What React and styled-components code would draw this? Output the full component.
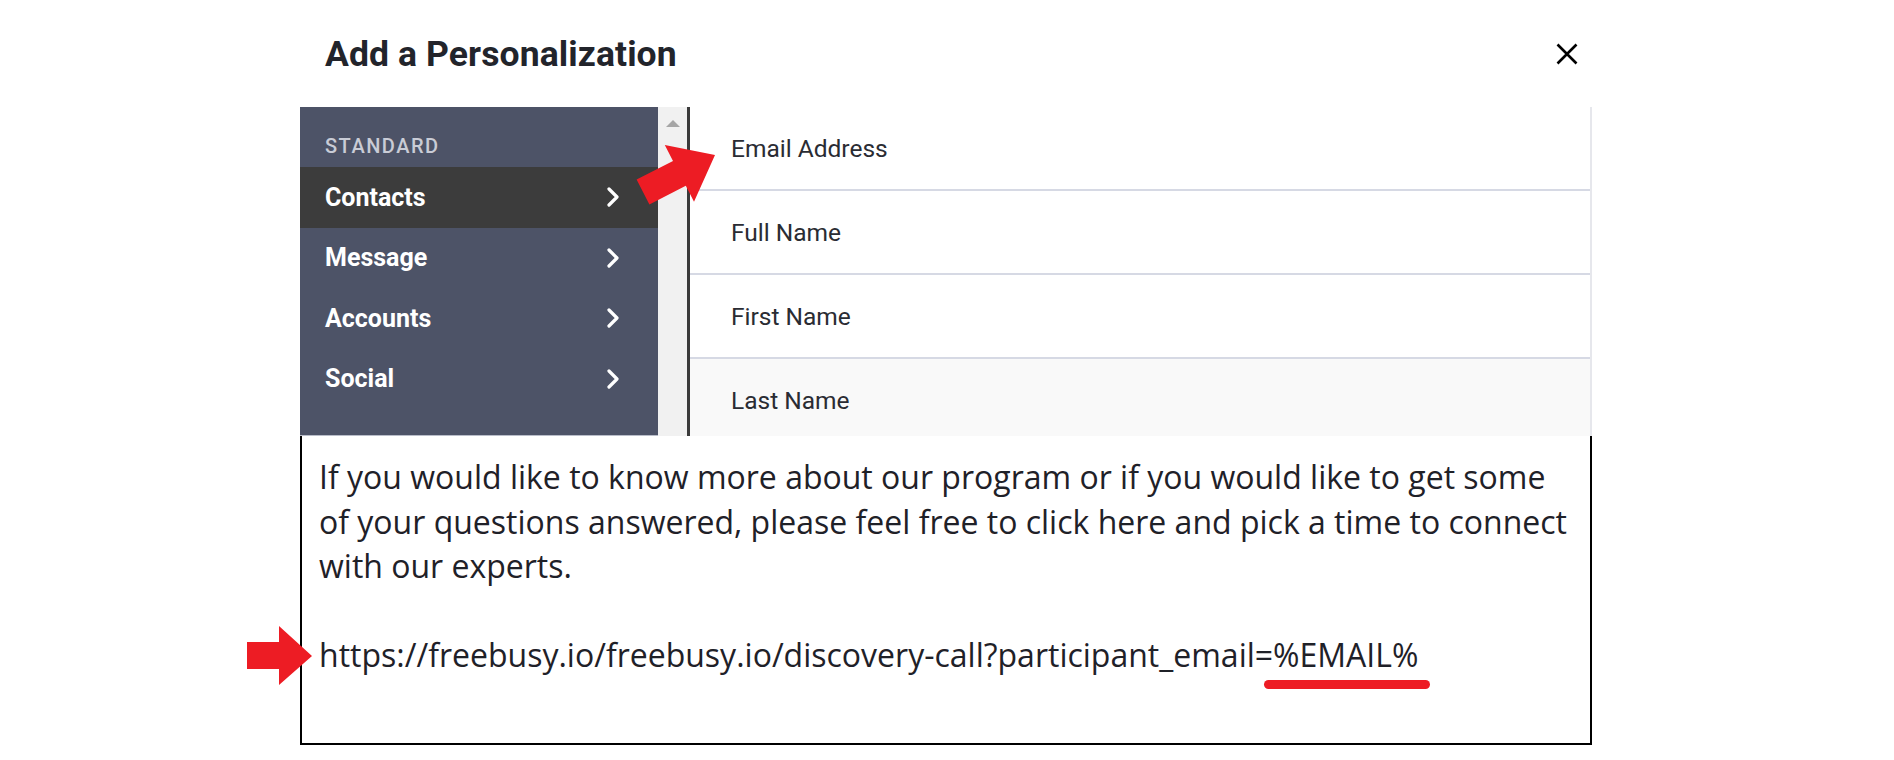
import styled, { createGlobalStyle } from "styled-components";

const COLORS = {
  red: "#ed1c24",
  sidebar: "#4d5367",
  active: "#3c3c3c",
  track: "#f1f1f1",
  line: "#d6d9e4",
  ink: "#22242b",
};

const GlobalStyle = createGlobalStyle`
  html, body {
    margin: 0;
    padding: 0;
    background: #ffffff;
  }
  body {
    width: 1894px;
    height: 760px;
    overflow: hidden;
  }
`;

const sections = ["Contacts", "Message", "Accounts", "Social"];
const fields = ["Email Address", "Full Name", "First Name", "Last Name"];

const Chevron = () => (
  <svg width="12" height="20" viewBox="0 0 12 20">
    <polyline
      points="2,2 10,10 2,18"
      fill="none"
      stroke="#ffffff"
      strokeWidth="3.2"
      strokeLinecap="round"
      strokeLinejoin="round"
    />
  </svg>
);

const CloseIcon = () => (
  <svg width="22" height="22" viewBox="0 0 22 22">
    <path d="M1.5 1.5 L20.5 20.5 M20.5 1.5 L1.5 20.5" stroke="#000" strokeWidth="2.6" />
  </svg>
);

const App = () => {
  return (
    <>
      <GlobalStyle />
      <Page>
        <Modal>
          <Header>
            <Title>Add a Personalization</Title>
            <CloseButton aria-label="Close">
              <CloseIcon />
            </CloseButton>
          </Header>
          <Body>
            <Sidebar>
              <GroupLabel>STANDARD</GroupLabel>
              {sections.map((s) => (
                <SideItem key={s} active={s === "Contacts"}>
                  {s}
                  <Chevron />
                </SideItem>
              ))}
            </Sidebar>
            <ScrollTrack>
              <ScrollUp />
            </ScrollTrack>
            <FieldList>
              {fields.map((f, i) => (
                <FieldRow key={f} shaded={i === fields.length - 1}>
                  {f}
                </FieldRow>
              ))}
            </FieldList>
          </Body>
          <Editor>
            If you would like to know more about our program or if you would like to get some
            <br />
            of your questions answered, please feel free to click here and pick a time to connect
            <br />
            with our experts.
            <br />
            <br />
            https://freebusy.io/freebusy.io/discovery-call?participant_email=
            <Token>%EMAIL%</Token>
          </Editor>
        </Modal>
        {/* annotation arrows drawn over the screenshot */}
        <Annotations width="1894" height="760" viewBox="0 0 1894 760">
          <polygon
            fill={COLORS.red}
            points="636.6,179.6 673,160.9 664.8,144.9 715,155 694,201.7 685.8,185.7 649.4,204.4"
          />
          <polygon
            fill={COLORS.red}
            points="247,642 279,642 279,626 312,656 279,685 279,669 247,669"
          />
        </Annotations>
      </Page>
    </>
  );
};

const Page = styled.div`
  position: relative;
  width: 1894px;
  height: 760px;
  font-family: Roboto, "Noto Sans", sans-serif;
`;
const Modal = styled.div`
  margin-left: 300px;
  width: 1292px;
  display: flex;
  flex-direction: column;
`;
const Header = styled.div`
  height: 107px;
  display: flex;
  align-items: center;
  justify-content: space-between;
  padding: 0 14px 0 25px;
  box-sizing: border-box;
`;
const Title = styled.h1`
  margin: 0;
  font-size: 35.5px;
  font-weight: 700;
  color: ${COLORS.ink};
  letter-spacing: 0.1px;
`;
const CloseButton = styled.button`
  display: flex;
  align-items: center;
  justify-content: center;
  background: none;
  border: none;
  padding: 0;
  cursor: pointer;
`;
const Body = styled.div`
  display: flex;
  height: 329px;
`;
const Sidebar = styled.div`
  width: 358px;
  background: ${COLORS.sidebar};
  display: flex;
  flex-direction: column;
  border-bottom: 1px solid #b9bdc9;
  box-sizing: border-box;
`;
const GroupLabel = styled.div`
  padding: 27px 25px 9px;
  line-height: 24px;
  font-size: 20px;
  font-weight: 500;
  letter-spacing: 1.5px;
  color: #c9ccd6;
`;
const SideItem = styled.div`
  height: 60.5px;
  display: flex;
  align-items: center;
  justify-content: space-between;
  padding: 0 39px 0 25px;
  font-size: 25px;
  font-weight: 700;
  color: #ffffff;
  background: ${({ active }) => (active ? COLORS.active : "transparent")};
`;
const ScrollTrack = styled.div`
  width: 29px;
  background: ${COLORS.track};
  border-right: 3px solid #3a3a3a;
  display: flex;
  justify-content: center;
  padding-top: 13px;
  box-sizing: content-box;
`;
const ScrollUp = styled.div`
  width: 0;
  height: 0;
  border-left: 7px solid transparent;
  border-right: 7px solid transparent;
  border-bottom: 7px solid #a6a6a6;
`;
const FieldList = styled.div`
  flex: 1;
  display: flex;
  flex-direction: column;
  border-right: 2px solid #e6e7ec;
  overflow: hidden;
`;
const FieldRow = styled.div`
  flex: 0 0 82px;
  display: flex;
  align-items: center;
  padding-left: 41px;
  font-size: 24.5px;
  color: #2a2c33;
  background: ${({ shaded }) => (shaded ? "#f9f9f9" : "#ffffff")};
  border-bottom: 2px solid ${COLORS.line};
`;
const Editor = styled.div`
  height: 309px;
  box-sizing: border-box;
  border: 2px solid #000;
  border-top: none;
  padding: 19px 17px 0;
  font-family: "Open Sans", "Noto Sans", sans-serif;
  font-size: 32px;
  line-height: 44.5px;
  color: #1f2128;
  white-space: nowrap;
`;
const Token = styled.span`
  position: relative;
  font-size: 32px;
  &::after {
    content: "";
    position: absolute;
    left: -9px;
    right: -12px;
    top: calc(100% + 4px);
    height: 9px;
    border-radius: 5px;
    background: ${COLORS.red};
  }
`;
const Annotations = styled.svg`
  position: absolute;
  top: 0;
  left: 0;
  pointer-events: none;
`;

export default App;
